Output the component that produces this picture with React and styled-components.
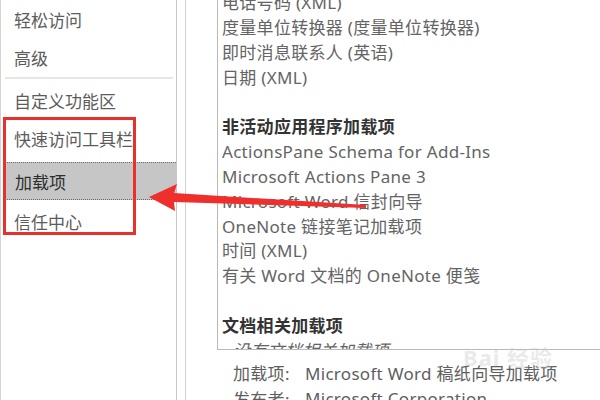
import React from "react";
import styled, { createGlobalStyle } from "styled-components";

const GlobalStyle = createGlobalStyle`
  html, body {
    margin: 0;
    padding: 0;
    background: #ffffff;
    overflow: hidden;
  }
  body {
    font-family: "Noto Sans", "Noto Sans CJK SC", sans-serif;
  }
`;

const Window = styled.div`
  position: relative;
  display: flex;
  flex-direction: row;
  width: 600px;
  height: 400px;
  overflow: hidden;
  background: #ffffff;
  border-left: 1px solid #d4d4d4;
  box-sizing: border-box;
`;

const Sidebar = styled.div`
  display: flex;
  flex-direction: column;
  width: 175px;
  flex-shrink: 0;
  border-right: 1px solid #c6c6c6;
`;

const NavItem = styled.div`
  height: ${(p) => (p.$active ? "36px" : "38px")};
  margin: ${(p) => (p.$active ? "5px 0 2px 3px" : "0")};
  padding-left: ${(p) => (p.$active ? "10px" : "13px")};
  display: flex;
  align-items: center;
  font-size: 17px;
  white-space: nowrap;
  overflow: hidden;
  color: ${(p) => (p.$active ? "#2e2e2e" : "#5c5c5c")};
  background: ${(p) => (p.$active ? "#c6c6c6" : "transparent")};
  border: ${(p) => (p.$active ? "1px dotted #6a6a6a" : "none")};
  border-right: none;
`;

const Separator = styled.div`
  height: 2px;
  margin: 1px 3px 2px 4px;
  background: #e6e6e6;
`;

const Gap = styled.div`
  width: 8px;
  flex-shrink: 0;
`;

const Main = styled.div`
  flex: 1;
  display: flex;
  flex-direction: column;
  border-left: 1px solid #d0d0d0;
  padding-left: 31px;
`;

const ListBox = styled.div`
  height: 350px;
  flex-shrink: 0;
  overflow: hidden;
  border-left: 1px solid #b9b9b9;
  border-bottom: 1px solid #b9b9b9;
  box-sizing: border-box;
`;

const ListInner = styled.div`
  margin-top: -9px;
  padding-left: 4px;
`;

const Line = styled.div`
  height: 24.85px;
  line-height: 24.85px;
  font-size: 17px;
  letter-spacing: 0.3px;
  white-space: nowrap;
  color: ${(p) => (p.$heading ? "#333333" : "#646464")};
  font-weight: ${(p) => (p.$heading ? 700 : 400)};
  font-style: ${(p) => (p.$note ? "italic" : "normal")};
  padding-left: ${(p) => (p.$note ? "11px" : "0")};
`;

const Details = styled.div`
  padding: 9px 0 0 16px;
  display: flex;
  flex-direction: column;
`;

const DetailRow = styled.div`
  display: flex;
  height: 26px;
  align-items: center;
  font-size: 17px;
  letter-spacing: 0.3px;
  white-space: nowrap;
  color: #5e5e5e;
`;

const DetailLabel = styled.span`
  width: 72px;
  flex-shrink: 0;
`;

const Highlight = styled.div`
  position: absolute;
  left: 2px;
  top: 117px;
  width: 133px;
  height: 118px;
  border: 3px solid #e8302d;
  box-sizing: border-box;
  pointer-events: none;
`;

const Watermark = styled.div`
  position: absolute;
  left: 462px;
  top: 340px;
  font-size: 22px;
  font-weight: 700;
  color: rgba(200, 200, 200, 0.4);
  letter-spacing: 1px;
  pointer-events: none;
`;

const Overlay = styled.svg`
  position: absolute;
  left: 0;
  top: 0;
  pointer-events: none;
`;

const navItems = [
  { label: "轻松访问" },
  { label: "高级" },
  { sep: true },
  { label: "自定义功能区" },
  { label: "快速访问工具栏" },
  { label: "加载项", active: true },
  { label: "信任中心" },
];

const lines = [
  { text: "电话号码 (XML)" },
  { text: "度量单位转换器 (度量单位转换器)" },
  { text: "即时消息联系人 (英语)" },
  { text: "日期 (XML)" },
  { text: "" },
  { text: "非活动应用程序加载项", heading: true },
  { text: "ActionsPane Schema for Add-Ins" },
  { text: "Microsoft Actions Pane 3" },
  { text: "Microsoft Word 信封向导" },
  { text: "OneNote 链接笔记加载项" },
  { text: "时间 (XML)" },
  { text: "有关 Word 文档的 OneNote 便笺" },
  { text: "" },
  { text: "文档相关加载项", heading: true },
  { text: "没有文档相关加载项", note: true },
];

export default function App() {
  return (
    <>
      <GlobalStyle />
      <Window>
        <Sidebar>
          {navItems.map((item, idx) =>
            item.sep ? (
              <Separator key={idx} />
            ) : (
              <NavItem key={item.label} $active={item.active}>
                {item.label}
              </NavItem>
            )
          )}
        </Sidebar>
        <Gap />
        <Main>
          <ListBox>
            <ListInner>
              {lines.map((l, idx) => (
                <Line key={idx} $heading={l.heading} $note={l.note}>
                  {l.text}
                </Line>
              ))}
            </ListInner>
          </ListBox>
          <Details>
            <DetailRow>
              <DetailLabel>加载项:</DetailLabel>
              Microsoft Word 稿纸向导加载项
            </DetailRow>
            <DetailRow>
              <DetailLabel>发布者:</DetailLabel>
              Microsoft Corporation
            </DetailRow>
          </Details>
        </Main>

        <Highlight />
        <Watermark>Bai 经验</Watermark>
        <Overlay width="600" height="400" viewBox="0 0 600 400">
          <polygon
            fill="#ee2f2b"
            points="148,197 176,184 173,193 365,205 365,208 173,202 174,211"
          />
        </Overlay>
      </Window>
    </>
  );
}
